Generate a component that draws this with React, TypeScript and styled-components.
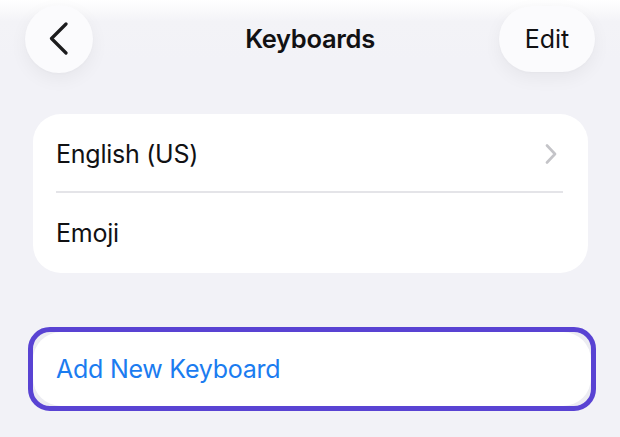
import React from "react";
import styled, { createGlobalStyle } from "styled-components";

const Global = createGlobalStyle`
  html, body {
    margin: 0;
    padding: 0;
    background: #f2f2f7;
  }
  body {
    font-family: Inter, "Liberation Sans", Arial, sans-serif;
    -webkit-font-smoothing: antialiased;
  }
`;

const Screen = styled.div`
  width: 620px;
  height: 437px;
  overflow: hidden;
  background: linear-gradient(#ffffff 0px, #f3f3f7 22px, #f2f2f7 60px);
  display: flex;
  flex-direction: column;
`;

const Header = styled.header`
  height: 74px;
  padding: 3px 25px 0 25px;
  box-sizing: border-box;
  display: flex;
  align-items: center;
  justify-content: space-between;
  position: relative;
`;

const GlassButton = styled.button<{ $w: number; $h: number }>`
  width: ${(p) => p.$w}px;
  height: ${(p) => p.$h}px;
  border: none;
  border-radius: 999px;
  background: #fbfbfd;
  box-shadow: 0 6px 18px rgba(0, 0, 0, 0.05), 0 1px 3px rgba(0, 0, 0, 0.02);
  display: flex;
  align-items: center;
  justify-content: center;
  padding: 0;
  font-family: inherit;
  font-size: 25px;
  font-weight: 400;
  color: #111113;
  letter-spacing: 0px;
`;

const Title = styled.h1`
  position: absolute;
  left: 0;
  right: 0;
  top: 3px;
  bottom: 0;
  margin: 0;
  display: flex;
  align-items: center;
  justify-content: center;
  font-size: 25.5px;
  font-weight: 600;
  color: #111113;
  letter-spacing: -0.3px;
  pointer-events: none;
`;

const Content = styled.main`
  padding: 40px 32px 0 33px;
  display: flex;
  flex-direction: column;
  gap: 54px;
`;

const Card = styled.div`
  background: #ffffff;
  border-radius: 28px;
  overflow: hidden;
`;

const Row = styled.div<{ $h: number; $divider?: boolean }>`
  height: ${(p) => p.$h}px;
  display: flex;
  align-items: center;
  justify-content: space-between;
  padding: 0 31px 0 23px;
  position: relative;
  font-size: 25px;
  color: #111113;
  letter-spacing: -0.25px;
  &::after {
    content: "";
    display: ${(p) => (p.$divider ? "block" : "none")};
    position: absolute;
    left: 23px;
    right: 25px;
    bottom: 0;
    height: 2px;
    background: #e4e4e8;
  }
`;

const FocusRing = styled.div`
  margin: 0 -8px 0 -5px;
  border: 5px solid #5943d3;
  border-radius: 22px;
  background: #ececf2;
  overflow: hidden;
`;

const ActionCard = styled(Card)`
  border-radius: 28px;
`;

const ActionText = styled.span`
  color: #1b7cf0;
`;

const BackIcon = () => (
  <svg width="20" height="33" viewBox="0 0 20 33" fill="none">
    <path
      d="M17 2 L2.5 16.5 L17 31"
      stroke="#1c1c1e"
      strokeWidth="3.2"
      strokeLinecap="round"
      strokeLinejoin="round"
    />
  </svg>
);

const ChevronRight = () => (
  <svg width="12" height="20" viewBox="0 0 12 20" fill="none">
    <path
      d="M2 1.5 L10 10 L2 18.5"
      stroke="#c4c4c8"
      strokeWidth="2.6"
      strokeLinecap="round"
      strokeLinejoin="round"
    />
  </svg>
);

export default function App() {
  return (
    <Screen>
      <Global />
      <Header>
        <GlassButton $w={68} $h={68} aria-label="Back">
          <BackIcon />
        </GlassButton>
        <Title>Keyboards</Title>
        <GlassButton $w={96} $h={66}>Edit</GlassButton>
      </Header>
      <Content>
        <Card>
          <Row $h={79} $divider>
            <span>English (US)</span>
            <ChevronRight />
          </Row>
          <Row $h={80}>
            <span>Emoji</span>
          </Row>
        </Card>
        <FocusRing>
          <ActionCard>
            <Row $h={74}>
              <ActionText>Add New Keyboard</ActionText>
            </Row>
          </ActionCard>
        </FocusRing>
      </Content>
    </Screen>
  );
}
